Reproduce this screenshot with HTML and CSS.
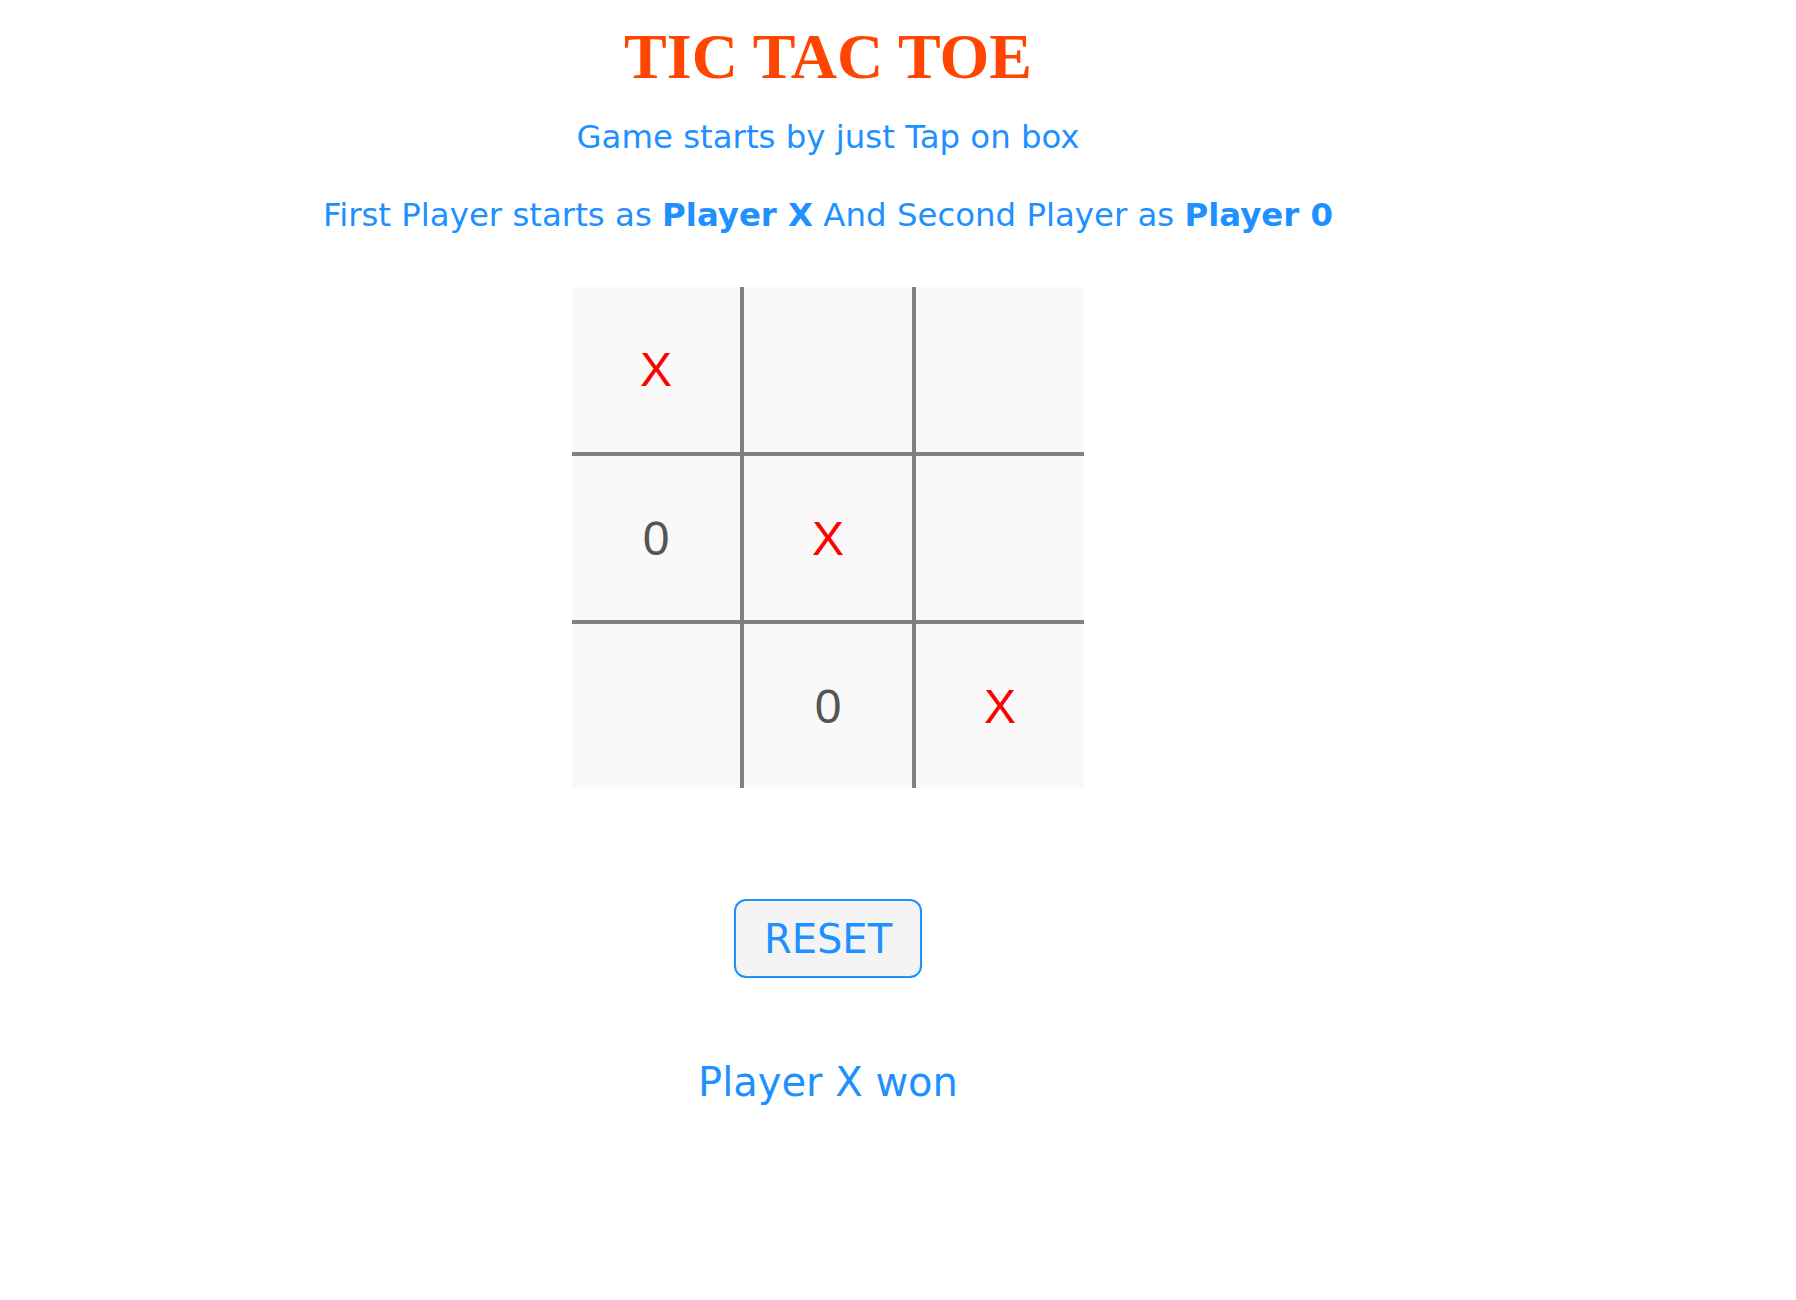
FILE: index.html
```html
<!DOCTYPE html>
<html lang="en">
<head>
<meta charset="utf-8">
<title>Tic Tac Toe</title>
<link rel="stylesheet" href="styles.css">
</head>
<body>
<div class="app">
  <h1 class="title">TIC TAC TOE</h1>
  <p class="sub">Game starts by just Tap on box</p>
  <p class="info">First Player starts as <b>Player X</b> And Second Player as <b>Player 0</b></p>
  <div class="board">
    <div class="cell c1 r1 x">X</div>
    <div class="cell c2 r1"></div>
    <div class="cell c3 r1"></div>
    <div class="cell c1 r2 o">0</div>
    <div class="cell c2 r2 x">X</div>
    <div class="cell c3 r2"></div>
    <div class="cell c1 r3"></div>
    <div class="cell c2 r3 o">0</div>
    <div class="cell c3 r3 x">X</div>
  </div>
  <button class="reset" type="button">RESET</button>
  <p class="result">Player X won</p>
</div>
</body>
</html>
```
FILE: styles.css
```css
body {
  margin: 8px;
  background: #ffffff;
  font-family: "DejaVu Sans", Verdana, sans-serif;
}
.app {
  width: 1640px;
  text-align: center;
}
.title {
  margin: 12px 0 0;
  font-family: "Liberation Serif", "Times New Roman", serif;
  font-weight: bold;
  font-size: 64px;
  line-height: 74px;
  color: #ff4500;
}
.sub {
  margin: 24px 0 0;
  font-size: 32.4px;
  line-height: 38px;
  color: #1e90ff;
}
.info {
  margin: 40px 0 0;
  font-size: 32.4px;
  line-height: 38px;
  color: #1e90ff;
}
.board {
  margin: 53px auto 0;
  width: 512px;
  display: grid;
  grid-template-columns: 172px 172px 168px;
  grid-template-rows: 169px 168px 164px;
}
.cell {
  box-sizing: border-box;
  background: #f9f9f9;
  display: flex;
  align-items: center;
  justify-content: center;
  font-family: "Liberation Sans", Arial, sans-serif;
  font-size: 48px;
}
.c1, .c2 { border-right: 4px solid #808080; }
.r1, .r2 { border-bottom: 4px solid #808080; }
.x { color: #ff0000; }
.o { color: #555555; }
.reset {
  display: block;
  margin: 111px auto 0;
  padding: 15px 28px 13px;
  border: 2px solid #1e90ff;
  border-radius: 12px;
  background: #f4f4f4;
  color: #1e90ff;
  font-family: "DejaVu Sans", Verdana, sans-serif;
  font-size: 40px;
  line-height: 47px;
}
.result {
  margin: 81px 0 0;
  font-size: 40px;
  line-height: 46px;
  color: #1e90ff;
}
```
